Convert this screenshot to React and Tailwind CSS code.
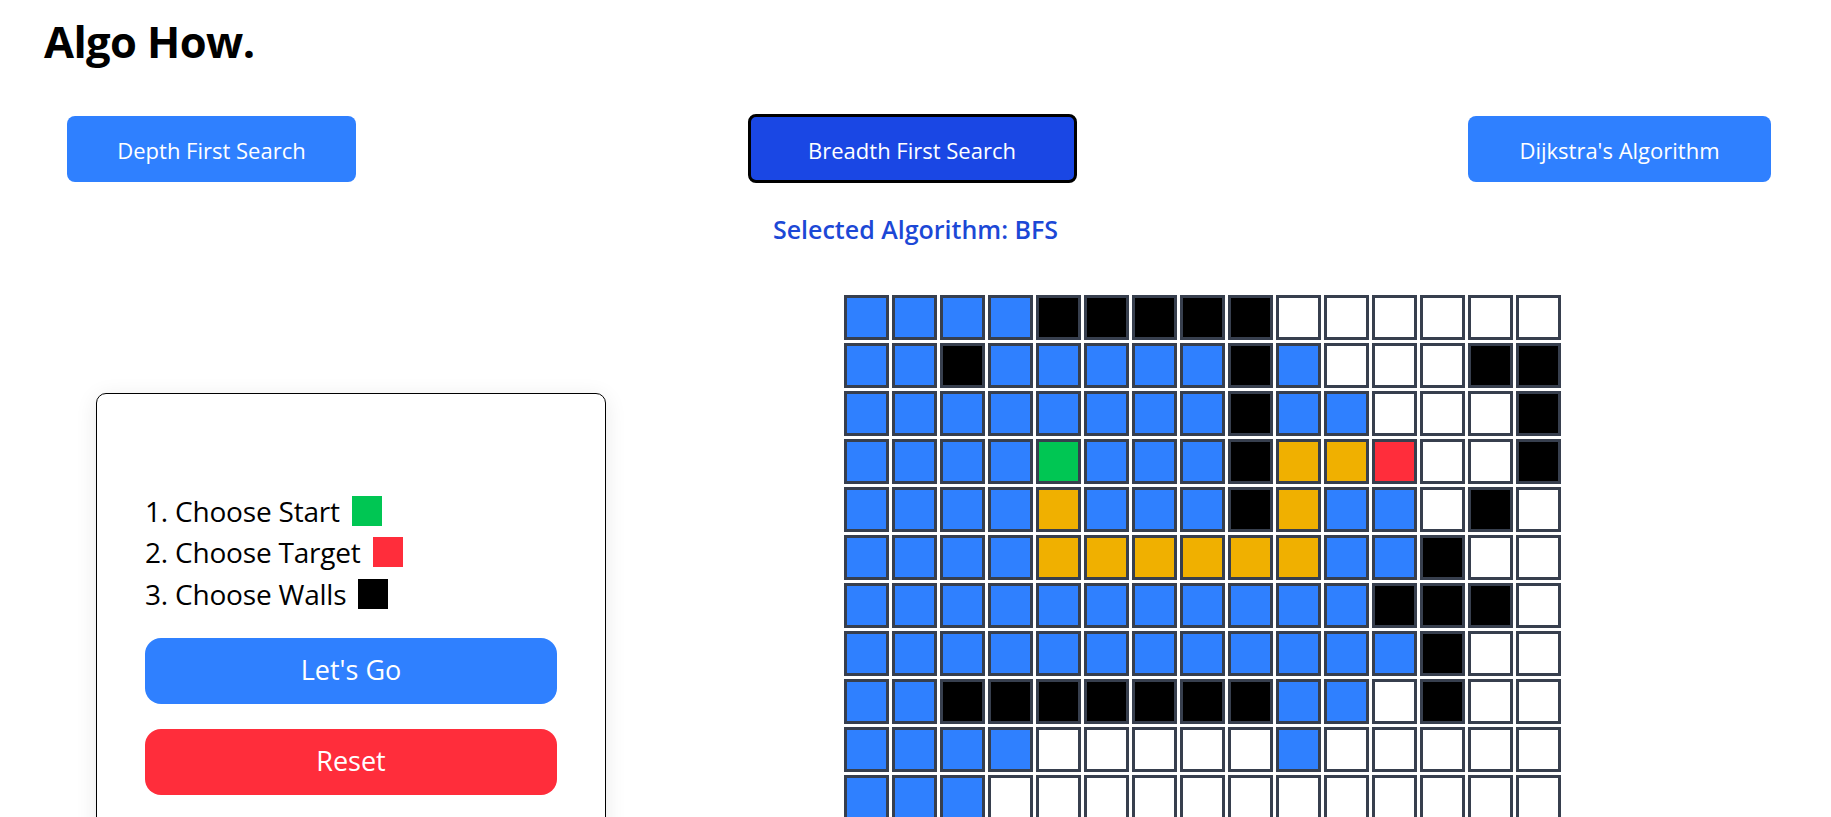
import { useState } from 'react';

/*
 * Algo How. — path-finding visualiser.
 * Algorithm picker on top, instructions panel on the left, grid on the right.
 */

const GRID = [
  'BBBBKKKKKWWWWWW',
  'BBKBBBBBKBWWWKK',
  'BBBBBBBBKBBWWWK',
  'BBBBGBBBKYYRWWK',
  'BBBBYBBBKYBBWKW',
  'BBBBYYYYYYBBKWW',
  'BBBBBBBBBBBKKKW',
  'BBBBBBBBBBBBKWW',
  'BBKKKKKKKBBWKWW',
  'BBBBWWWWWBWWWWW',
  'BBBWWWWWWWWWWWW',
  'BBWWWWWWWWWWWWW',
  'BWWWWWWWWWWWWWW',
  'WWWWWWWWWWWWWWW',
  'WWWWWWWWWWWWWWW',
];

const CELL = {
  B: 'bg-[#2f80ff]',
  K: 'bg-black',
  W: 'bg-white',
  G: 'bg-[#00c653]',
  Y: 'bg-[#f0b000]',
  R: 'bg-[#ff2d3b]',
};

const ALGOS = [
  { id: 'DFS', label: 'Depth First Search', width: 'w-[289px]' },
  { id: 'BFS', label: 'Breadth First Search', width: 'w-[329px]' },
  { id: 'DIJ', label: "Dijkstra's Algorithm", width: 'w-[303px]' },
];

function Step({ text, swatch }) {
  return (
    <li className="flex items-center gap-[12px] h-[41.5px]">
      <span>{text}</span>
      <span className={`inline-block w-[30px] h-[30px] ${swatch}`} />
    </li>
  );
}

export default function App() {
  const [algo, setAlgo] = useState('BFS');

  return (
    <div className="min-h-screen bg-white text-black font-['Open_Sans','Noto_Sans',sans-serif]">
      {/* Title */}
      <h1 className="pl-[44px] pt-[16px] text-[43.5px] leading-[52px] font-bold tracking-[-0.6px]">
        Algo How.
      </h1>

      {/* Algorithm picker */}
      <nav className="mt-[46px] flex items-center justify-between pl-[67px] pr-[60px]">
        {ALGOS.map((a) =>
          a.id === algo ? (
            <button
              key={a.id}
              onClick={() => setAlgo(a.id)}
              className={`${a.width} h-[69px] rounded-[8px] border-[3px] border-black bg-[#1a47e4] pt-[3px] text-white text-[22px]`}
            >
              {a.label}
            </button>
          ) : (
            <button
              key={a.id}
              onClick={() => setAlgo(a.id)}
              className={`${a.width} h-[66px] rounded-[8px] bg-[#2f80ff] pt-[3px] text-white text-[22px]`}
            >
              {a.label}
            </button>
          )
        )}
      </nav>

      <p className="mt-[31px] text-center text-[25px] leading-[30px] font-semibold text-[#1c48d6]">
        Selected Algorithm: {algo}
      </p>

      <main className="mt-[51px] flex items-start">
        {/* Instructions */}
        <section className="ml-[96px] mt-[98px] w-[510px] h-[480px] shrink-0 rounded-[10px] border border-black bg-white px-[48px] pt-[96px] shadow-[0_4px_22px_rgba(0,0,0,0.09)]">
          <ol className="text-[28px] tracking-[-0.2px]">
            <Step text="1. Choose Start" swatch="bg-[#00c653]" />
            <Step text="2. Choose Target" swatch="bg-[#ff2d3b]" />
            <Step text="3. Choose Walls" swatch="bg-black" />
          </ol>
          <button className="mt-[23px] w-full h-[66px] rounded-[16px] bg-[#2f80ff] text-white text-[27px]">
            Let's Go
          </button>
          <button className="mt-[25px] w-full h-[66px] rounded-[16px] bg-[#ff2d3b] text-white text-[27px]">
            Reset
          </button>
        </section>

        {/* Grid */}
        <div className="ml-[238px] grid grid-cols-[repeat(15,45px)] gap-[3px]">
          {GRID.map((row, r) =>
            row.split('').map((c, i) => (
              <div
                key={`${r}-${i}`}
                className={`w-[45px] h-[45px] border-[3px] border-[#373f4e] ${CELL[c]}`}
              />
            ))
          )}
        </div>
      </main>
    </div>
  );
}
